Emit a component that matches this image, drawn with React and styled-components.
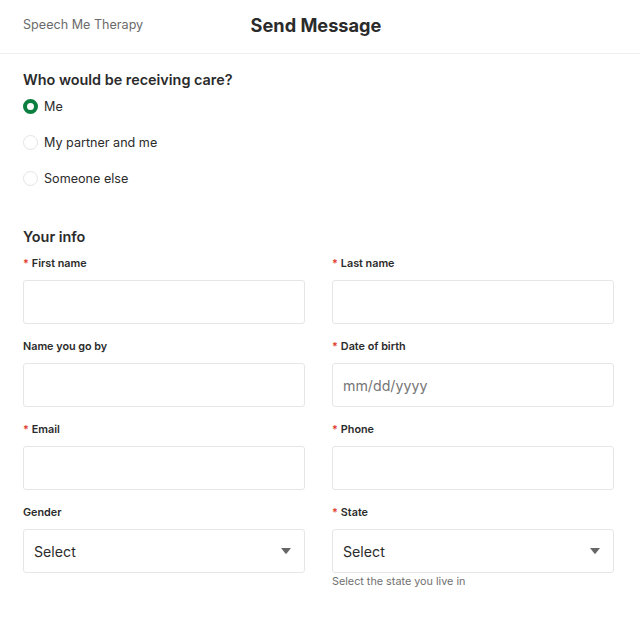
import styled, { createGlobalStyle } from "styled-components";

const GlobalStyle = createGlobalStyle`
    * { box-sizing: border-box; }
    body {
        margin: 0;
        background: #fff;
        font-family: Inter, "Noto Sans", sans-serif;
        color: #2b2b2b;
    }
`;

const options = ["Me", "My partner and me", "Someone else"];

const fields = [
    [
        { label: "First name", required: true },
        { label: "Last name", required: true },
    ],
    [
        { label: "Name you go by" },
        { label: "Date of birth", required: true, placeholder: "mm/dd/yyyy" },
    ],
    [
        { label: "Email", required: true },
        { label: "Phone", required: true },
    ],
    [
        { label: "Gender", select: true },
        { label: "State", required: true, select: true, hint: "Select the state you live in" },
    ],
];

function Field({ field }) {
    return (
        <FieldBox>
            <Label>
                {field.required ? <Star>*</Star> : null}
                {field.label}
            </Label>
            {field.select ? (
                <SelectBox>
                    <span>Select</span>
                    <Caret viewBox="0 0 10 6">
                        <path d="M0 0h10L5.6 5.4a.8.8 0 0 1-1.2 0z" />
                    </Caret>
                </SelectBox>
            ) : (
                <Input placeholder={field.placeholder || ""} />
            )}
            {field.hint ? <Hint>{field.hint}</Hint> : null}
        </FieldBox>
    );
}

export default function App() {
    return (
        <>
            <GlobalStyle />
            <Header>
                <Brand>Speech Me Therapy</Brand>
                <Title>Send Message</Title>
                <div />
            </Header>
            <Main>
                <Question>Who would be receiving care?</Question>
                <RadioList>
                    {options.map((o, i) => (
                        <RadioRow key={o}>
                            <Radio checked={i === 0} />
                            {o}
                        </RadioRow>
                    ))}
                </RadioList>
                <SectionTitle>Your info</SectionTitle>
                <Grid>
                    {fields.flat().map((f) => (
                        <Field key={f.label} field={f} />
                    ))}
                </Grid>
            </Main>
        </>
    );
}

const Header = styled.header`
    height: 54px;
    display: grid;
    grid-template-columns: 1fr auto 1fr;
    align-items: center;
    padding: 0 23px;
    border-bottom: 1px solid #efefef;
`;

const Brand = styled.div`
    font-size: 12.6px;
    color: #6b6b6b;
    margin-bottom: 5px;
`;

const Title = styled.h1`
    margin: 0 0 4px -8px;
    font-size: 18.2px;
    font-weight: 700;
    color: #2b2b2b;
`;

const Main = styled.main`
    padding: 16px 26px 0 23px;
`;

const Question = styled.h2`
    margin: 0;
    font-size: 14.4px;
    font-weight: 600;
    line-height: 20px;
    color: #2b2b2b;
`;

const RadioList = styled.div`
    display: flex;
    flex-direction: column;
    gap: 14px;
    margin-top: 5px;
`;

const RadioRow = styled.label`
    display: flex;
    align-items: center;
    gap: 6px;
    height: 22px;
    font-size: 12.6px;
    color: #2b2b2b;
`;

const Radio = styled.span`
    width: 15px;
    height: 15px;
    border-radius: 50%;
    border: ${(p) => (p.checked ? "4px solid #0b7f3f" : "1px solid #e4e4e4")};
    background: #fff;
    flex-shrink: 0;
`;

const SectionTitle = styled.h2`
    margin: 38px 0 0;
    font-size: 14.4px;
    font-weight: 600;
    line-height: 20px;
    color: #2b2b2b;
`;

const Grid = styled.div`
    display: grid;
    grid-template-columns: 1fr 1fr;
    column-gap: 27px;
    row-gap: 16px;
    margin-top: 10px;
`;

const FieldBox = styled.div`
    display: flex;
    flex-direction: column;
`;

const Label = styled.div`
    font-size: 10.8px;
    font-weight: 600;
    line-height: 14px;
    color: #2b2b2b;
    margin-bottom: 9px;
`;

const Star = styled.span`
    color: #e0412c;
    margin-right: 3px;
`;

const Input = styled.input`
    height: 44px;
    width: 100%;
    border: 1px solid #e6e6e6;
    border-radius: 3px;
    padding: 0 10px;
    font-family: Inter, sans-serif;
    font-size: 14.2px;
    color: #2b2b2b;
    outline: none;
    &::placeholder {
        color: #757575;
    }
`;

const SelectBox = styled.div`
    height: 44px;
    border: 1px solid #e6e6e6;
    border-radius: 3px;
    padding: 0 13px 0 10px;
    display: flex;
    align-items: center;
    justify-content: space-between;
    font-size: 14.2px;
    color: #2b2b2b;
`;

const Caret = styled.svg`
    width: 10px;
    height: 6px;
    fill: #666;
`;

const Hint = styled.div`
    margin-top: 2px;
    font-size: 10.8px;
    color: #707070;
`;
